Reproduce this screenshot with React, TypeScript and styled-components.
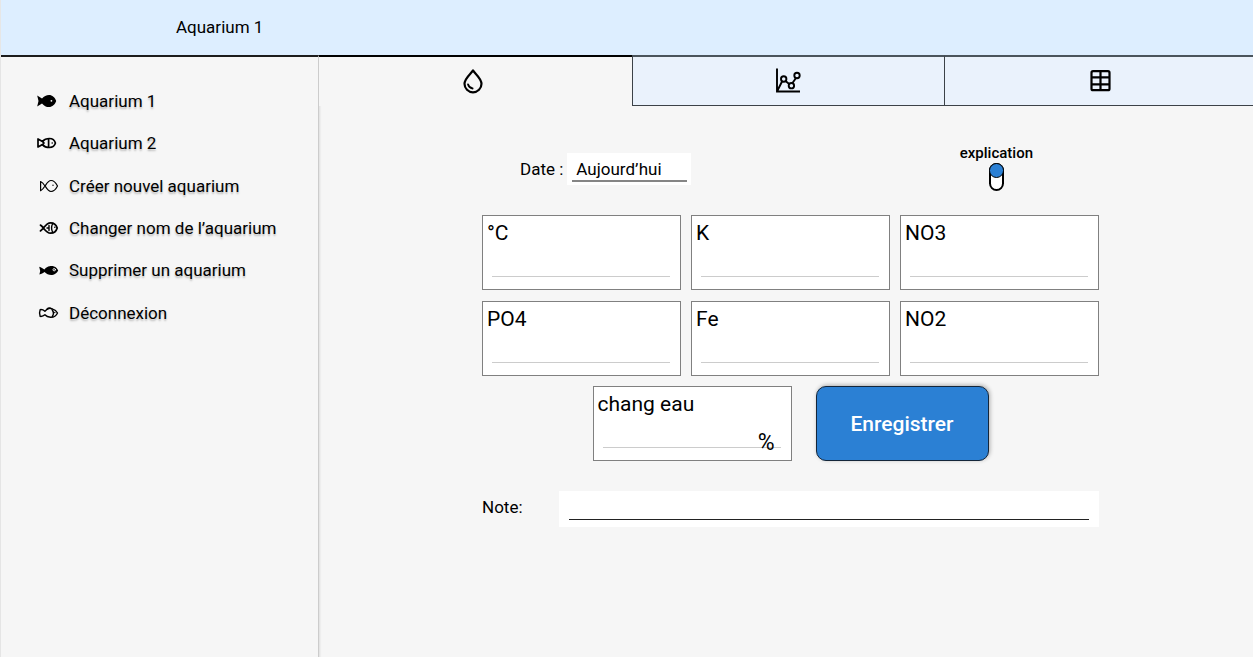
import React, { useState } from "react";
import styled, { createGlobalStyle } from "styled-components";

const GlobalStyle = createGlobalStyle`
  *, *::before, *::after { box-sizing: border-box; }
  body { margin: 0; background: #f6f6f6; }
  body, button, input { font-family: Roboto, "Liberation Sans", sans-serif; color: #000; }
`;

const Page = styled.div`
  min-height: 100vh;
  display: flex;
  flex-direction: column;
  border-left: 1px solid #e6e6e6;
  background: #f6f6f6;
`;

const Header = styled.header`
  height: 55px;
  display: flex;
  align-items: flex-start;
  padding: 17px 0 0 175px;
  background: #ddeeff;
`;

const Title = styled.h1`
  margin: 0;
  font-size: 17px;
  line-height: 20px;
  font-weight: 400;
`;

const Body = styled.div`
  flex: 1;
  display: flex;
`;

const Sidebar = styled.nav`
  flex: 0 0 318px;
  padding: 23px 0 0 36px;
  border-top: 2px solid #1c1c1c;
  border-right: 1px solid #cccccc;
  box-shadow: 1px 2px 2px rgba(0, 0, 0, 0.1);
`;

const Menu = styled.ul`
  height: 254px;
  margin: 0;
  padding: 0;
  display: grid;
  grid-template-rows: repeat(6, 1fr);
  list-style: none;
`;

const MenuLink = styled.a`
  height: 100%;
  display: flex;
  align-items: center;
  gap: 10px;
  color: #000;
  font-size: 17px;
  line-height: 20px;
  text-decoration: none;
  text-shadow: 0 2px 2px rgba(0, 0, 0, 0.25);
`;

const FishSvg = styled.svg`
  flex: none;
  width: 22px;
  height: 14px;
  fill: none;
  stroke: #000;
  stroke-linejoin: round;
  stroke-linecap: round;
`;

const Main = styled.main`
  flex: 1;
  min-width: 0;
`;

const Tabs = styled.div`
  display: grid;
  grid-template-columns: 313fr 313fr 309fr;
`;

const Tab = styled.button<{ $active: boolean }>`
  height: 51px;
  padding: 0;
  display: flex;
  align-items: center;
  justify-content: center;
  cursor: pointer;
  background: ${(p) => (p.$active ? "#f6f6f6" : "#eaf2fc")};
  border: 0 solid #3c4248;
  border-top: 2px solid ${(p) => (p.$active ? "#000" : "#4a545c")};
  border-bottom-width: ${(p) => (p.$active ? 0 : 1)}px;
  border-left-width: ${(p) => (p.$active ? 0 : 1)}px;

  svg {
    fill: none;
    stroke: #000;
  }
`;

const FormArea = styled.div`
  padding: 39px 0 0 9px;
`;

const Form = styled.form`
  width: 617px;
  max-width: 100%;
  margin: 0 auto;
`;

const TopRow = styled.div`
  height: 70px;
  padding: 0 66px 0 38px;
  display: flex;
  justify-content: space-between;
  align-items: flex-start;
`;

const DateField = styled.label`
  padding-top: 8px;
  display: flex;
  align-items: center;
  gap: 4px;
  font-size: 17px;
  line-height: 20px;
`;

const DateBox = styled.span`
  width: 124px;
  height: 32px;
  padding: 3px 4px 3px 5px;
  background: #fff;
`;

const DateInput = styled.input`
  display: block;
  width: 100%;
  height: 26px;
  padding: 1px 4px 0;
  border: 0;
  border-bottom: 2px solid #858585;
  background: transparent;
  font-size: 17px;
  outline: none;
`;

const Explain = styled.label`
  display: flex;
  flex-direction: column;
  align-items: center;
  gap: 2px;
  font-size: 15px;
  line-height: 16px;
  font-weight: 500;
`;

const Toggle = styled.input`
  appearance: none;
  width: 15px;
  height: 28px;
  margin: 0;
  display: flex;
  align-items: flex-start;
  border-radius: 8px;
  background: #fff;
  box-shadow: inset 0 0 0 2px #000;

  &::before {
    content: "";
    width: 15px;
    height: 15px;
    border: 1px solid #000;
    border-radius: 50%;
    background: #2b80d4;
  }

  &:checked {
    align-items: flex-end;
  }
`;

const Cards = styled.div`
  display: grid;
  grid-template-columns: repeat(3, minmax(0, 1fr));
  gap: 11px 10px;
`;

const Card = styled.label`
  height: 75px;
  padding: 5px 10px 0 4px;
  display: flex;
  flex-direction: column;
  border: 1px solid #808080;
  background: #fff;
  font-size: 21px;
  line-height: 25px;
`;

const CardLine = styled.span`
  height: 31px;
  margin-left: 5px;
  display: flex;
  align-items: flex-end;
  border-bottom: 1px solid #ccc;
`;

const CardInput = styled.input`
  flex: 1;
  min-width: 0;
  height: 26px;
  padding: 0 4px;
  border: 0;
  background: transparent;
  font-size: 21px;
  outline: none;
`;

const Unit = styled.span`
  margin: 0 6px -8px 0;
  font-size: 23px;
`;

const ActionRow = styled.div`
  margin-top: 10px;
  display: grid;
  grid-template-columns: 199px 173px;
  justify-content: center;
  gap: 24px;
`;

const SaveButton = styled.button`
  height: 75px;
  border: 1px solid #14263a;
  border-radius: 10px;
  background: #2b80d4;
  color: #fff;
  font-size: 21px;
  font-weight: 500;
  cursor: pointer;
  box-shadow: 1px -1px 4px rgba(0, 0, 0, 0.3);
`;

const NoteRow = styled.label`
  margin-top: 30px;
  display: flex;
  gap: 36px;
  font-size: 17px;
  line-height: 32px;
`;

const NoteBox = styled.span`
  width: 540px;
  height: 36px;
  padding: 0 10px;
  background: #fff;
`;

const NoteInput = styled.input`
  display: block;
  width: 100%;
  height: 29px;
  padding: 0 4px;
  border: 0;
  border-bottom: 1px solid #222;
  background: transparent;
  font-size: 17px;
  outline: none;
`;

const menu = [
  {
    label: "Aquarium 1",
    icon: (
      <>
        <path fill="#000" stroke="none" d="M.2 1.500 5 4.600C7 2.200 9.300 1 12 1c3.300 0 6 2.400 7.200 6-1.200 3.600-3.900 6-7.200 6-2.700 0-5-1.200-7-3.600L.2 12.500 1.500 7z" />
        <circle cx="14.400" cy="6.800" r=".9" fill="#fff" stroke="none" />
      </>
    ),
  },
  {
    label: "Aquarium 2",
    icon: (
      <>
        <path strokeWidth="1.700" d="M1 3v8l4.500-2.400C7.500 11 10 11.500 12.400 11.500c3 0 5.300-1.800 6-4.500-.7-2.700-3-4.500-6-4.500C10 2.500 7.500 3 5.500 5.400z" />
        <path strokeWidth="1.700" d="M5.500 5.400 7 7 5.500 8.600M11.600 3v8" />
        <circle cx="15.200" cy="7" r=".8" fill="#000" stroke="none" />
      </>
    ),
  },
  {
    label: "Créer nouvel aquarium",
    icon: (
      <>
        <path strokeWidth="1.200" d="M3.600 2.500v9.200C5.400 10.800 6.800 9 8.200 6.800 9.800 4.300 11.400 1.500 14 1.500c2.700 0 5 2.500 6.500 5.500-1.500 3-3.800 5.500-6.500 5.500-2.600 0-4.200-2.800-5.800-5.300C6.800 5 5.400 3.200 3.600 2.500z" />
        <circle cx="16" cy="6.300" r=".7" fill="#000" stroke="none" />
      </>
    ),
  },
  {
    label: "Changer nom de l’aquarium",
    icon: (
      <>
        <path strokeWidth="1.800" d="M3.500 4.200C6.500 5.500 8.500 12.200 13.500 12.200c3.300 0 5.800-2.200 6.700-5.200-.9-3-3.400-5.200-6.700-5.200C8.500 1.800 6.500 8.500 3.500 9.800" />
        <path strokeWidth="1.400" d="M12 4.500v5M10 7h2M15.700 2.500c-1.500 3-1.500 6 0 9" />
        <circle cx="17.800" cy="6.300" r=".8" fill="#000" stroke="none" />
      </>
    ),
  },
  {
    label: "Supprimer un aquarium",
    icon: (
      <>
        <path fill="#000" stroke="none" d="M2.200 3.800c2 .5 3.700 1.700 5.200 2.700C9.200 4.400 10.800 3.700 12.500 3.300c1.500-.4 3.200-.3 4.500.1 2 .6 3.400 2 4.200 4.100-1.200 2.400-3.500 4.100-6 4.400-3 .3-5.600-.9-7.600-2.900-1.600 1.200-3.200 2-5.200 2.400L3.200 8z" />
        <circle cx="17.200" cy="6.700" r="1.200" strokeWidth=".9" stroke="#fff" />
      </>
    ),
  },
  {
    label: "Déconnexion",
    icon: (
      <>
        <path strokeWidth="1.400" d="M3.200 3.600c-.8 2.200-.8 4.600 0 6.800 1.800.2 3.400-.4 4.700-1.600 1.300 1.500 3.300 2.400 5.600 2.500 3.200.1 5.800-1.600 7-4.300-1.100-2.200-2.700-3.500-4.700-3.900-2.600-1.200-5.900-.4-7.900 2.100C6.600 4 5 3.400 3.200 3.600z" />
        <path strokeWidth="1.400" d="M10 3.300c1-1.200 2.800-1.600 4.800-.5M15.300 4c1.400 2 1.400 4.500 0 6.500" />
        <circle cx="17.800" cy="6.500" r=".7" fill="#000" stroke="none" />
      </>
    ),
  },
];

const tabs = [
  {
    name: "Mesures",
    icon: (
      <svg width="24" height="26" viewBox="0 0 24 26">
        <path strokeWidth="2.200" strokeLinejoin="round" d="M10 1.500C7.500 5 1.500 9.500 1.500 14.800a8.500 8.500 0 0 0 17 0C18.500 9.500 12.500 5 10 1.500z" />
        <path strokeWidth="1.800" strokeLinecap="round" d="M5 15.300c.5 2.200 2.200 3.800 4.600 4.200" />
      </svg>
    ),
  },
  {
    name: "Graphique",
    icon: (
      <svg width="26" height="26" viewBox="0 0 26 26">
        <path strokeWidth="1.900" d="M2 .5v23h23M2 23.500 7.400 12.800M10.200 12.800l4.300 3.400M17.300 15.200l3.500-5" />
        <g strokeWidth="1.900">
          <circle cx="8.700" cy="11" r="2.700" />
          <circle cx="16.400" cy="17.700" r="2.700" />
          <circle cx="22" cy="7.500" r="2.700" />
        </g>
      </svg>
    ),
  },
  {
    name: "Tableau",
    icon: (
      <svg width="20" height="22" viewBox="0 0 20 22" overflow="visible">
        <rect x="2.500" y="1.200" width="18" height="19" rx="1.500" strokeWidth="2.200" />
        <path strokeWidth="2.200" d="M11.500 1.200v19M2.500 7.300h18M2.500 14.300h18" />
      </svg>
    ),
  },
];

const measures = ["°C", "K", "NO3", "PO4", "Fe", "NO2"];

export default function App() {
  const [active, setActive] = useState(0);

  return (
    <Page>
      <GlobalStyle />
      <Header>
        <Title>Aquarium 1</Title>
      </Header>
      <Body>
        <Sidebar>
          <Menu>
            {menu.map((item) => (
              <li key={item.label}>
                <MenuLink href="#">
                  <FishSvg viewBox="0 0 22 14" aria-hidden="true">
                    {item.icon}
                  </FishSvg>
                  {item.label}
                </MenuLink>
              </li>
            ))}
          </Menu>
        </Sidebar>
        <Main>
          <Tabs role="tablist">
            {tabs.map((tab, i) => (
              <Tab
                key={tab.name}
                type="button"
                role="tab"
                aria-label={tab.name}
                aria-selected={i === active}
                $active={i === active}
                onClick={() => setActive(i)}
              >
                {tab.icon}
              </Tab>
            ))}
          </Tabs>
          <FormArea>
            <Form onSubmit={(e) => e.preventDefault()}>
              <TopRow>
                <DateField>
                  Date :
                  <DateBox>
                    <DateInput defaultValue="Aujourd’hui" />
                  </DateBox>
                </DateField>
                <Explain>
                  explication
                  <Toggle type="checkbox" />
                </Explain>
              </TopRow>
              <Cards>
                {measures.map((name) => (
                  <Card key={name}>
                    {name}
                    <CardLine>
                      <CardInput />
                    </CardLine>
                  </Card>
                ))}
              </Cards>
              <ActionRow>
                <Card>
                  chang eau
                  <CardLine>
                    <CardInput />
                    <Unit>%</Unit>
                  </CardLine>
                </Card>
                <SaveButton type="submit">Enregistrer</SaveButton>
              </ActionRow>
              <NoteRow>
                Note:
                <NoteBox>
                  <NoteInput />
                </NoteBox>
              </NoteRow>
            </Form>
          </FormArea>
        </Main>
      </Body>
    </Page>
  );
}
